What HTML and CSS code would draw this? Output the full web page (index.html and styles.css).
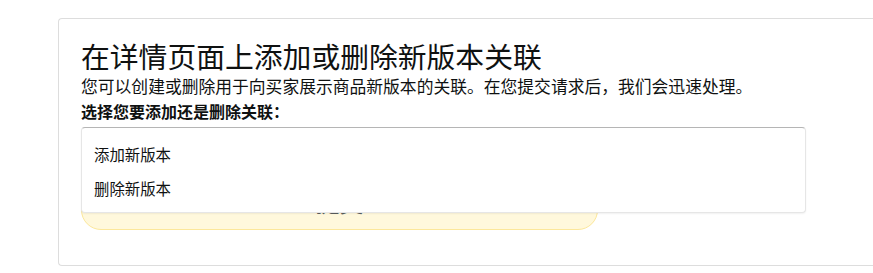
FILE: index.html
```html
<!DOCTYPE html>
<html lang="zh-CN">
<head>
<meta charset="utf-8">
<link rel="stylesheet" href="styles.css">
</head>
<body>
<div class="card">
  <h1 class="title">在详情页面上添加或删除新版本关联</h1>
  <p class="desc">您可以创建或删除用于向买家展示商品新版本的关联。在您提交请求后，我们会迅速处理。</p>
  <p class="label">选择您要添加还是删除关联：</p>
  <div class="picker">
    <button class="trigger">提交</button>
    <ul class="menu">
      <li class="option">添加新版本</li>
      <li class="option">删除新版本</li>
    </ul>
  </div>
</div>
</body>
</html>
```
FILE: styles.css
```css
html, body {
  margin: 0;
  padding: 0;
  background: #ffffff;
  overflow: hidden;
}
body {
  font-family: "Noto Sans CJK SC", "Noto Sans", sans-serif;
  color: #0f1111;
  padding: 18px 0 0 58px;
}
.card {
  width: 815px;
  height: 248px;
  box-sizing: border-box;
  border: 1px solid #dddddd;
  border-right: none;
  border-radius: 4px 0 0 4px;
  padding: 19px 0 0 22px;
}
.title {
  margin: 0;
  font-size: 28.8px;
  line-height: 36px;
  font-weight: 400;
  color: #0f1111;
}
.desc {
  margin: 0;
  font-size: 16.8px;
  line-height: 24px;
}
.label {
  margin: 1px 0 0 0;
  font-size: 16px;
  line-height: 24px;
  font-weight: 700;
}
.picker {
  position: relative;
  width: 725px;
  padding-top: 56px;
}
.trigger {
  display: block;
  margin: 0;
  width: 517px;
  height: 51px;
  box-sizing: border-box;
  background: #fff8dc;
  border: 1px solid #fce79a;
  border-radius: 20px;
  font-family: "Noto Sans CJK SC", sans-serif;
  font-size: 24px;
  color: #5a5e5e;
  padding: 0 0 7px 0;
}
.menu {
  position: absolute;
  top: 4px;
  left: 0;
  right: 0;
  margin: 0;
  padding: 9px 0 7px 0;
  list-style: none;
  background: #ffffff;
  border: 1px solid #e6e6e6;
  border-top: 1px solid #b5b5b5;
  border-radius: 4px;
  box-shadow: 0 1px 2px rgba(0,0,0,0.06);
}
.option {
  font-size: 15.4px;
  line-height: 34px;
  padding-left: 12px;
  color: #0f1111;
}
```
